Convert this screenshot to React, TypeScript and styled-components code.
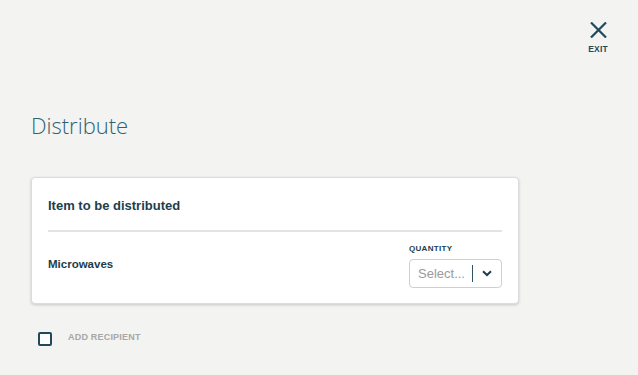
import React from "react";
import styled, { createGlobalStyle } from "styled-components";

const Global = createGlobalStyle`
  html, body { margin: 0; padding: 0; background: #f3f3f1; }
  body { font-family: "Liberation Sans", Arial, sans-serif; }
  * { box-sizing: border-box; }
`;

const Page = styled.div`
  width: 638px;
  height: 375px;
  background: #f3f3f1;
  display: flex;
  flex-direction: column;
  padding: 22px 31px 0 31px;
`;

const TopBar = styled.div`
  height: 32px;
  display: flex;
  justify-content: flex-end;
  margin-right: -6px;
`;

const ExitButton = styled.button`
  background: none;
  border: none;
  padding: 0;
  display: flex;
  flex-direction: column;
  align-items: center;
  cursor: pointer;
  width: 30px;
  font-family: "Liberation Sans", Arial, sans-serif;
`;

const ExitLabel = styled.span`
  font-size: 8.5px;
  font-weight: 700;
  letter-spacing: 0.2px;
  margin-top: 6px;
  line-height: 10px;
  color: #1f4a5c;
`;

const Title = styled.h1`
  margin: 56px 0 0 0;
  font-family: "Open Sans", "Noto Sans", sans-serif;
  font-size: 22px;
  font-weight: 300;
  color: #2d6273;
  line-height: 30px;
`;

const Card = styled.div`
  margin-top: 37px;
  width: 488px;
  height: 127px;
  background: #fff;
  border: 1px solid #dcdcdc;
  border-radius: 4px;
  box-shadow: 0 1px 3px rgba(0, 0, 0, 0.18);
  padding: 0 16px;
  display: flex;
  flex-direction: column;
`;

const CardHeader = styled.div`
  height: 54px;
  display: flex;
  align-items: center;
  border-bottom: 2px solid #e3e3e3;
  font-size: 13px;
  font-weight: 700;
  color: #1d3e4c;
  padding-top: 2px;
`;

const ItemRow = styled.div`
  display: flex;
  justify-content: space-between;
  align-items: flex-start;
  padding-top: 12px;
`;

const ItemName = styled.div`
  font-size: 11.5px;
  font-weight: 700;
  color: #1d3e4c;
  margin-top: 14px;
`;

const Field = styled.div`
  display: flex;
  flex-direction: column;
`;

const FieldLabel = styled.label`
  font-size: 8px;
  font-weight: 700;
  color: #1d3e4c;
  letter-spacing: 0.3px;
  line-height: 10px;
  margin-bottom: 5px;
`;

const SelectBox = styled.div`
  width: 93px;
  height: 29px;
  border: 1px solid #cfcfcf;
  border-radius: 4px;
  display: flex;
  align-items: center;
  padding-left: 8px;
  background: #fff;
`;

const Placeholder = styled.span`
  flex: 1;
  font-size: 13px;
  color: #9a9a9a;
`;

const Separator = styled.span`
  width: 1px;
  height: 17px;
  background: #2d5566;
`;

const Chevron = styled.span`
  width: 28px;
  display: flex;
  justify-content: center;
  align-items: center;
`;

const RecipientRow = styled.div`
  display: flex;
  align-items: center;
  margin-top: 28px;
  margin-left: 7px;
`;

const Checkbox = styled.span`
  width: 14px;
  height: 14px;
  border: 2px solid #1f4a5c;
  border-radius: 2px;
  background: #fff;
`;

const RecipientLabel = styled.span`
  margin-left: 16px;
  font-size: 9px;
  font-weight: 700;
  color: #a7a7a7;
  letter-spacing: 0.2px;
  margin-top: -5px;
`;

export default function App() {
  return (
    <Page>
      <Global />
      <TopBar>
        <ExitButton>
          <svg width="17" height="16" viewBox="0 0 17 16">
            <path d="M1 0.5 L16 15.5 M16 0.5 L1 15.5" stroke="#1f4a5c" strokeWidth="2.2" fill="none" />
          </svg>
          <ExitLabel>EXIT</ExitLabel>
        </ExitButton>
      </TopBar>
      <Title>Distribute</Title>
      <Card>
        <CardHeader>Item to be distributed</CardHeader>
        <ItemRow>
          <ItemName>Microwaves</ItemName>
          <Field>
            <FieldLabel>QUANTITY</FieldLabel>
            <SelectBox>
              <Placeholder>Select...</Placeholder>
              <Separator />
              <Chevron>
                <svg width="10" height="7" viewBox="0 0 10 7">
                  <path d="M1 1.2 L5 5 L9 1.2" stroke="#1d3e4c" strokeWidth="2" fill="none" />
                </svg>
              </Chevron>
            </SelectBox>
          </Field>
        </ItemRow>
      </Card>
      <RecipientRow>
        <Checkbox />
        <RecipientLabel>ADD RECIPIENT</RecipientLabel>
      </RecipientRow>
    </Page>
  );
}
